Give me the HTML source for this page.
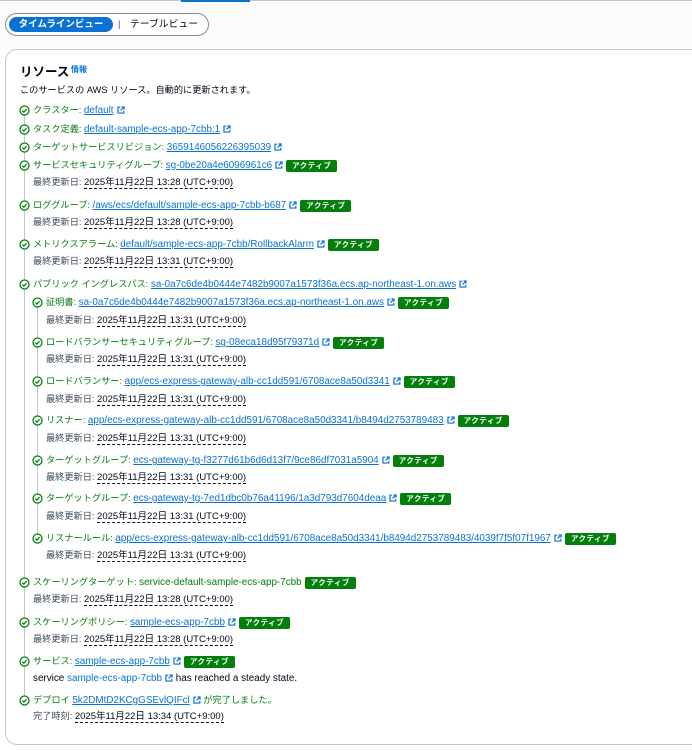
<!DOCTYPE html>
<html><head><meta charset="utf-8"><style>
*{box-sizing:border-box;margin:0;padding:0}
body{width:692px;height:750px;overflow:hidden;background:#fff;font-family:"Liberation Sans","Noto Sans CJK JP",sans-serif;font-size:9.2px;color:#000716;position:relative}
.band{position:absolute;left:0;top:0;width:692px;height:50px;background:#fbfbfb;border-top:1px solid #c6c6cd}
.uline{position:absolute;left:181px;top:0;width:69px;height:2px;background:#0972d3}
.seg{position:absolute;left:5px;top:13px;width:204px;height:23px;border:1px solid #8c8c94;border-radius:12px;background:#fff}
.sel{position:absolute;left:3px;top:3px;width:104px;height:15px;border-radius:8px;background:#0972d3;color:#fff;font-size:9.5px;font-weight:bold;text-align:center;line-height:15px}
.sep{position:absolute;left:112px;top:3px;font-size:9px;line-height:15px;color:#444}
.t2{position:absolute;left:124px;top:3px;font-size:9.8px;line-height:15px;color:#000716}
.card{position:absolute;left:5px;top:49px;width:720px;height:696px;border:1px solid #c6c6cd;border-radius:12px;background:#fff}
.title{position:absolute;left:20px;top:61px;font-size:12.5px;font-weight:bold;color:#000716}
.info{position:absolute;left:71px;top:64px;font-size:8px;font-weight:bold;color:#0972d3}
.desc{position:absolute;left:20px;top:82px;font-size:9.2px;color:#000716}
.vl{position:absolute;width:1px;background:#c6c6cd}
.r{position:absolute;white-space:nowrap;line-height:14px;height:14px}
.g{color:#037f0c}
.d{color:#414d5c}
.lt{font-size:9.9px}
a{color:#0972d3;text-decoration:underline;text-underline-offset:1px;font-size:9.9px}
.dt{border-bottom:1px dashed #000716;color:#000716;font-size:9.5px}
.b{display:inline-block;background:#037f0c;color:#fff;font-size:7.5px;font-weight:bold;padding:0 6px;height:12px;line-height:12px;border-radius:2px;vertical-align:middle;margin-left:3px;letter-spacing:.5px}
.ic{position:absolute;width:11px;height:11px}
svg.ex{width:8px;height:8px;vertical-align:-1px;margin-left:3px}
</style></head><body>
<div class="band"></div><div class="uline"></div>
<div class="seg"><div class="sel">タイムラインビュー</div><div class="sep">|</div><div class="t2">テーブルビュー</div></div>
<div class="card"></div>
<div class="title">リソース</div><div class="info">情報</div>
<div class="desc">このサービスの AWS リソース。自動的に更新されます。</div>
<div class="vl" style="left:24px;top:112px;height:590px"></div>
<div class="vl" style="left:37px;top:305px;height:235px"></div>
<svg width="0" height="0" style="position:absolute"><defs>
<symbol id="ck" viewBox="0 0 12 12"><circle cx="6" cy="6" r="4.9" fill="#fff" stroke="#037f0c" stroke-width="1.4"/><path d="M3.7 6.1l1.6 1.6 3-3.1" fill="none" stroke="#037f0c" stroke-width="1.4"/></symbol>
<symbol id="ex" viewBox="0 0 10 10"><path d="M4 1.5H1.2v7.3h7.3V6M5.5 1.2h3.3v3.3M8.8 1.2L4.5 5.5" fill="none" stroke="#0972d3" stroke-width="1.5"/></symbol>
</defs></svg>
<div id="rows"></div>
<script>
const E='<svg class="ex"><use href="#ex"/></svg>';
const B='<span class="b">アクティブ</span>';
const rows=[
[110,0,1,'クラスター: <a>default</a>'+E],
[129,0,1,'タスク定義: <a>default-sample-ecs-app-7cbb:1</a>'+E],
[147,0,1,'ターゲットサービスリビジョン: <a>3659146056226395039</a>'+E],
[165,0,1,'サービスセキュリティグループ: <a>sg-0be20a4e6096961c6</a>'+E+B],
[182,0,0,'最終更新日: <span class="dt">2025年11月22日 13:28 (UTC+9:00)</span>'],
[205,0,1,'ロググループ: <a>/aws/ecs/default/sample-ecs-app-7cbb-b687</a>'+E+B],
[222,0,0,'最終更新日: <span class="dt">2025年11月22日 13:28 (UTC+9:00)</span>'],
[244,0,1,'メトリクスアラーム: <a>default/sample-ecs-app-7cbb/RollbackAlarm</a>'+E+B],
[261,0,0,'最終更新日: <span class="dt">2025年11月22日 13:31 (UTC+9:00)</span>'],
[284,0,1,'パブリック イングレスパス: <a>sa-0a7c6de4b0444e7482b9007a1573f36a.ecs.ap-northeast-1.on.aws</a>'+E],
[302,1,1,'証明書: <a>sa-0a7c6de4b0444e7482b9007a1573f36a.ecs.ap-northeast-1.on.aws</a>'+E+B],
[320,1,0,'最終更新日: <span class="dt">2025年11月22日 13:31 (UTC+9:00)</span>'],
[342,1,1,'ロードバランサーセキュリティグループ: <a>sg-08eca18d95f79371d</a>'+E+B],
[359,1,0,'最終更新日: <span class="dt">2025年11月22日 13:31 (UTC+9:00)</span>'],
[381,1,1,'ロードバランサー: <a>app/ecs-express-gateway-alb-cc1dd591/6708ace8a50d3341</a>'+E+B],
[399,1,0,'最終更新日: <span class="dt">2025年11月22日 13:31 (UTC+9:00)</span>'],
[420,1,1,'リスナー: <a>app/ecs-express-gateway-alb-cc1dd591/6708ace8a50d3341/b8494d2753789483</a>'+E+B],
[438,1,0,'最終更新日: <span class="dt">2025年11月22日 13:31 (UTC+9:00)</span>'],
[460,1,1,'ターゲットグループ: <a>ecs-gateway-tg-f3277d61b6d6d13f7/9ce86df7031a5904</a>'+E+B],
[477,1,0,'最終更新日: <span class="dt">2025年11月22日 13:31 (UTC+9:00)</span>'],
[498,1,1,'ターゲットグループ: <a>ecs-gateway-tg-7ed1dbc0b76a41196/1a3d793d7604deaa</a>'+E+B],
[516,1,0,'最終更新日: <span class="dt">2025年11月22日 13:31 (UTC+9:00)</span>'],
[538,1,1,'リスナールール: <a>app/ecs-express-gateway-alb-cc1dd591/6708ace8a50d3341/b8494d2753789483/4039f7f5f07f1967</a>'+E+B],
[555,1,0,'最終更新日: <span class="dt">2025年11月22日 13:31 (UTC+9:00)</span>'],
[582,0,1,'スケーリングターゲット: <span class="lt">service-default-sample-ecs-app-7cbb</span>'+B],
[599,0,0,'最終更新日: <span class="dt">2025年11月22日 13:28 (UTC+9:00)</span>'],
[622,0,1,'スケーリングポリシー: <a>sample-ecs-app-7cbb</a>'+E+B],
[639,0,0,'最終更新日: <span class="dt">2025年11月22日 13:28 (UTC+9:00)</span>'],
[661,0,1,'サービス: <a>sample-ecs-app-7cbb</a>'+E+B],
[678,0,2,'<span class="lt" style="color:#000716">service </span><a style="text-decoration:none">sample-ecs-app-7cbb</a>'+E+'<span class="lt" style="color:#000716"> has reached a steady state.</span>'],
[700,0,1,'デプロイ <a>5k2DMtD2KCgGSEvlQIFcl</a>'+E+' が完了しました。'],
[716,0,0,'完了時刻: <span class="dt">2025年11月22日 13:34 (UTC+9:00)</span>']
];
let h='';
for(const [y,n,t,s] of rows){
 const x=n?46:33;
 if(t==1){h+=`<svg class="ic" style="left:${(n?37:24)-5.5}px;top:${y-5.5}px"><use href="#ck"/></svg>`;
  h+=`<div class="r g" style="left:${x}px;top:${y-7}px">${s}</div>`;}
 else h+=`<div class="r d" style="left:${x}px;top:${y-7}px">${s}</div>`;
}
document.getElementById('rows').innerHTML=h;
</script>
</body></html>
